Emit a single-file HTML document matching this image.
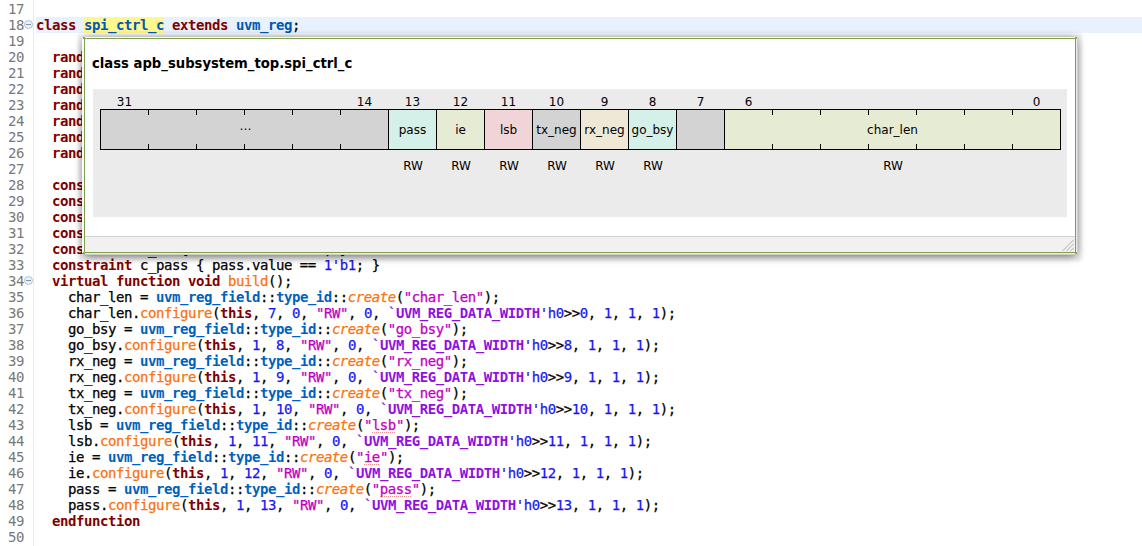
<!DOCTYPE html>
<html>
<head>
<meta charset="utf-8">
<title>spi_ctrl_c</title>
<style>
html,body{margin:0;padding:0;background:#fff;}
body{width:1142px;height:546px;position:relative;overflow:hidden;font-family:"DejaVu Sans Mono","Liberation Mono",monospace;font-size:14px;letter-spacing:-0.4334px;color:#000;}
.gutter{position:absolute;left:33px;top:0;width:1px;height:546px;background:#ebebeb;}
.ln{position:absolute;left:0;width:1142px;height:16px;line-height:16px;white-space:pre;}
.ln.cur::before{content:"";position:absolute;left:36px;right:0;top:0;height:16px;background:#e8f2fe;z-index:0;}
.num{position:absolute;left:8px;top:0;color:#787878;}
.tx{position:absolute;left:36px;top:0;z-index:1;-webkit-text-stroke:0.25px;}
.fold{position:absolute;left:24px;top:3px;width:7px;height:7px;border:1px solid #b3c1d5;border-radius:50%;background:#e8f0f9;box-sizing:content-box;}
.fold::after{content:"";position:absolute;left:1px;top:3px;width:5px;height:1px;background:#8292a8;}
b,i{font-weight:normal;font-style:normal;}
b{font-weight:bold;-webkit-text-stroke:0;}
i{font-style:italic;}
.k{color:#7f0000;}
.t{color:#0060c0;}
.c{color:#0058b4;}
.f{color:#f87410;}
.n{color:#1818f0;}
.s{color:#c000c0;}
.s u{text-decoration:none;position:relative;}
.s u::after{content:"";position:absolute;left:0;right:0;bottom:0;height:1px;background:repeating-linear-gradient(90deg,#f08a8a 0,#f08a8a 1px,transparent 1px,transparent 2px);}
.m{color:#9010e0;}
.occ{background:#fff790;}
.pop{letter-spacing:0;z-index:10;position:absolute;left:84px;top:38px;width:990px;height:213px;border:1px solid #7ea04d;background:#fff;box-shadow:-1px -1px 0 0 #fcfafc,1px 1px 0 0 #ece8ec,-2px 0 0 0 #fdfbfd,2px 2px 0 0 #cfc9c9,0.4px 2px 9px 0 rgba(0,0,0,.7),0 2px 3px 6px rgba(0,0,0,.08);font-family:"DejaVu Sans","Liberation Sans",sans-serif;}
.title{position:absolute;left:7px;top:17px;font-size:13.2px;font-weight:bold;line-height:16px;white-space:pre;}
.panel{position:absolute;left:8px;top:50px;width:974px;height:128px;background:#ebebeb;}
.status{position:absolute;left:0;right:0;bottom:0;height:15px;border-top:1px solid #d4d2d0;background:#f2f1f0;}
.cell{position:absolute;top:70px;height:39px;border:1px solid #000;font-size:12px;line-height:41px;text-align:center;white-space:pre;}
.bit{position:absolute;top:56px;width:49px;height:14px;line-height:14px;font-size:12px;text-align:center;}
.acc{position:absolute;top:120px;height:14px;line-height:14px;font-size:12px;text-align:center;}
.cn{position:absolute;width:2px;height:2px;background:#8aa85e;}
.grip{position:absolute;right:1px;bottom:1px;width:12px;height:12px;}
.el{position:relative;top:-4px;left:1px;}
.tick{position:absolute;width:1px;height:5px;background:#000;}
</style>
</head>
<body>
<div class="gutter"></div>
<div class="ln" style="top:1px"><span class="num">17</span><span class="tx"></span></div>
<div class="ln cur" style="top:17px"><span class="num">18</span><span class="fold"></span><span class="tx"><b class="k">class</b> <span class="occ"><b class="c">spi_ctrl_c</b></span> <b class="k">extends</b> <b class="c">uvm_reg</b>;</span></div>
<div class="ln" style="top:33px"><span class="num">19</span><span class="tx"></span></div>
<div class="ln" style="top:49px"><span class="num">20</span><span class="tx">  <b class="k">rand</b> <b class="t">uvm_reg_field</b> char_len;</span></div>
<div class="ln" style="top:65px"><span class="num">21</span><span class="tx">  <b class="k">rand</b> <b class="t">uvm_reg_field</b> go_bsy;</span></div>
<div class="ln" style="top:81px"><span class="num">22</span><span class="tx">  <b class="k">rand</b> <b class="t">uvm_reg_field</b> rx_neg;</span></div>
<div class="ln" style="top:97px"><span class="num">23</span><span class="tx">  <b class="k">rand</b> <b class="t">uvm_reg_field</b> tx_neg;</span></div>
<div class="ln" style="top:113px"><span class="num">24</span><span class="tx">  <b class="k">rand</b> <b class="t">uvm_reg_field</b> lsb;</span></div>
<div class="ln" style="top:129px"><span class="num">25</span><span class="tx">  <b class="k">rand</b> <b class="t">uvm_reg_field</b> ie;</span></div>
<div class="ln" style="top:145px"><span class="num">26</span><span class="tx">  <b class="k">rand</b> <b class="t">uvm_reg_field</b> pass;</span></div>
<div class="ln" style="top:161px"><span class="num">27</span><span class="tx"></span></div>
<div class="ln" style="top:177px"><span class="num">28</span><span class="tx">  <b class="k">constraint</b> c_go_bsy { go_bsy.value == <span class="n">1'b1</span>; }</span></div>
<div class="ln" style="top:193px"><span class="num">29</span><span class="tx">  <b class="k">constraint</b> c_rx_neg { rx_neg.value == <span class="n">1'b1</span>; }</span></div>
<div class="ln" style="top:209px"><span class="num">30</span><span class="tx">  <b class="k">constraint</b> c_tx_neg { tx_neg.value == <span class="n">1'b1</span>; }</span></div>
<div class="ln" style="top:225px"><span class="num">31</span><span class="tx">  <b class="k">constraint</b> c_lsb { lsb.value == <span class="n">1'b1</span>; }</span></div>
<div class="ln" style="top:241px"><span class="num">32</span><span class="tx">  <b class="k">constraint</b> c_ie { ie.value == <span class="n">1'b1</span>; }</span></div>
<div class="ln" style="top:257px"><span class="num">33</span><span class="tx">  <b class="k">constraint</b> c_pass { pass.value == <span class="n">1'b1</span>; }</span></div>
<div class="ln" style="top:273px"><span class="num">34</span><span class="fold"></span><span class="tx">  <b class="k">virtual</b> <b class="k">function</b> <b class="k">void</b> <span class="f">build</span>();</span></div>
<div class="ln" style="top:289px"><span class="num">35</span><span class="tx">    char_len = <b class="t">uvm_reg_field</b>::<b class="t">type_id</b>::<i class="f">create</i>(<span class="s">"char_len"</span>);</span></div>
<div class="ln" style="top:305px"><span class="num">36</span><span class="tx">    char_len.<span class="f">configure</span>(<b class="k">this</b>, <span class="n">7</span>, <span class="n">0</span>, <span class="s">"RW"</span>, <span class="n">0</span>, <b class="m">`UVM_REG_DATA_WIDTH</b><span class="n">'h0</span>&gt;&gt;<span class="n">0</span>, <span class="n">1</span>, <span class="n">1</span>, <span class="n">1</span>);</span></div>
<div class="ln" style="top:321px"><span class="num">37</span><span class="tx">    go_bsy = <b class="t">uvm_reg_field</b>::<b class="t">type_id</b>::<i class="f">create</i>(<span class="s">"go_bsy"</span>);</span></div>
<div class="ln" style="top:337px"><span class="num">38</span><span class="tx">    go_bsy.<span class="f">configure</span>(<b class="k">this</b>, <span class="n">1</span>, <span class="n">8</span>, <span class="s">"RW"</span>, <span class="n">0</span>, <b class="m">`UVM_REG_DATA_WIDTH</b><span class="n">'h0</span>&gt;&gt;<span class="n">8</span>, <span class="n">1</span>, <span class="n">1</span>, <span class="n">1</span>);</span></div>
<div class="ln" style="top:353px"><span class="num">39</span><span class="tx">    rx_neg = <b class="t">uvm_reg_field</b>::<b class="t">type_id</b>::<i class="f">create</i>(<span class="s">"rx_neg"</span>);</span></div>
<div class="ln" style="top:369px"><span class="num">40</span><span class="tx">    rx_neg.<span class="f">configure</span>(<b class="k">this</b>, <span class="n">1</span>, <span class="n">9</span>, <span class="s">"RW"</span>, <span class="n">0</span>, <b class="m">`UVM_REG_DATA_WIDTH</b><span class="n">'h0</span>&gt;&gt;<span class="n">9</span>, <span class="n">1</span>, <span class="n">1</span>, <span class="n">1</span>);</span></div>
<div class="ln" style="top:385px"><span class="num">41</span><span class="tx">    tx_neg = <b class="t">uvm_reg_field</b>::<b class="t">type_id</b>::<i class="f">create</i>(<span class="s">"tx_neg"</span>);</span></div>
<div class="ln" style="top:401px"><span class="num">42</span><span class="tx">    tx_neg.<span class="f">configure</span>(<b class="k">this</b>, <span class="n">1</span>, <span class="n">10</span>, <span class="s">"RW"</span>, <span class="n">0</span>, <b class="m">`UVM_REG_DATA_WIDTH</b><span class="n">'h0</span>&gt;&gt;<span class="n">10</span>, <span class="n">1</span>, <span class="n">1</span>, <span class="n">1</span>);</span></div>
<div class="ln" style="top:417px"><span class="num">43</span><span class="tx">    lsb = <b class="t">uvm_reg_field</b>::<b class="t">type_id</b>::<i class="f">create</i>(<span class="s">"<u>lsb</u>"</span>);</span></div>
<div class="ln" style="top:433px"><span class="num">44</span><span class="tx">    lsb.<span class="f">configure</span>(<b class="k">this</b>, <span class="n">1</span>, <span class="n">11</span>, <span class="s">"RW"</span>, <span class="n">0</span>, <b class="m">`UVM_REG_DATA_WIDTH</b><span class="n">'h0</span>&gt;&gt;<span class="n">11</span>, <span class="n">1</span>, <span class="n">1</span>, <span class="n">1</span>);</span></div>
<div class="ln" style="top:449px"><span class="num">45</span><span class="tx">    ie = <b class="t">uvm_reg_field</b>::<b class="t">type_id</b>::<i class="f">create</i>(<span class="s">"<u>ie</u>"</span>);</span></div>
<div class="ln" style="top:465px"><span class="num">46</span><span class="tx">    ie.<span class="f">configure</span>(<b class="k">this</b>, <span class="n">1</span>, <span class="n">12</span>, <span class="s">"RW"</span>, <span class="n">0</span>, <b class="m">`UVM_REG_DATA_WIDTH</b><span class="n">'h0</span>&gt;&gt;<span class="n">12</span>, <span class="n">1</span>, <span class="n">1</span>, <span class="n">1</span>);</span></div>
<div class="ln" style="top:481px"><span class="num">47</span><span class="tx">    pass = <b class="t">uvm_reg_field</b>::<b class="t">type_id</b>::<i class="f">create</i>(<span class="s">"<u>pass</u>"</span>);</span></div>
<div class="ln" style="top:497px"><span class="num">48</span><span class="tx">    pass.<span class="f">configure</span>(<b class="k">this</b>, <span class="n">1</span>, <span class="n">13</span>, <span class="s">"RW"</span>, <span class="n">0</span>, <b class="m">`UVM_REG_DATA_WIDTH</b><span class="n">'h0</span>&gt;&gt;<span class="n">13</span>, <span class="n">1</span>, <span class="n">1</span>, <span class="n">1</span>);</span></div>
<div class="ln" style="top:513px"><span class="num">49</span><span class="tx">  <b class="k">endfunction</b></span></div>
<div class="ln" style="top:529px"><span class="num">50</span><span class="tx"></span></div>
<div class="pop">
<div class="title">class apb_subsystem_top.spi_ctrl_c</div>
<div class="panel"></div>
<div class="cell" style="left:15px;width:287px;background:#d3d3d3"><span class="el">…</span></div>
<div class="bit" style="left:15px">31</div>
<div class="bit" style="left:255px">14</div>
<div class="tick" style="left:63px;top:71px"></div>
<div class="tick" style="left:63px;top:105px"></div>
<div class="tick" style="left:111px;top:71px"></div>
<div class="tick" style="left:111px;top:105px"></div>
<div class="tick" style="left:159px;top:71px"></div>
<div class="tick" style="left:159px;top:105px"></div>
<div class="tick" style="left:207px;top:71px"></div>
<div class="tick" style="left:207px;top:105px"></div>
<div class="tick" style="left:255px;top:71px"></div>
<div class="tick" style="left:255px;top:105px"></div>
<div class="cell" style="left:303px;width:47px;background:#d5efe9">pass</div>
<div class="bit" style="left:303px">13</div>
<div class="acc" style="left:303px;width:50px">RW</div>
<div class="cell" style="left:351px;width:47px;background:#e6ecd4">ie</div>
<div class="bit" style="left:351px">12</div>
<div class="acc" style="left:351px;width:50px">RW</div>
<div class="cell" style="left:399px;width:47px;background:#f0d4d8">lsb</div>
<div class="bit" style="left:399px">11</div>
<div class="acc" style="left:399px;width:50px">RW</div>
<div class="cell" style="left:447px;width:47px;background:#d3d3d3">tx_neg</div>
<div class="bit" style="left:447px">10</div>
<div class="acc" style="left:447px;width:50px">RW</div>
<div class="cell" style="left:495px;width:47px;background:#efe8d6">rx_neg</div>
<div class="bit" style="left:495px">9</div>
<div class="acc" style="left:495px;width:50px">RW</div>
<div class="cell" style="left:543px;width:47px;background:#d5efe9">go_bsy</div>
<div class="bit" style="left:543px">8</div>
<div class="acc" style="left:543px;width:50px">RW</div>
<div class="cell" style="left:591px;width:47px;background:#d3d3d3"></div>
<div class="bit" style="left:591px">7</div>
<div class="cell" style="left:639px;width:335px;background:#e6ecd4">char_len</div>
<div class="bit" style="left:639px">6</div>
<div class="bit" style="left:927px">0</div>
<div class="tick" style="left:687px;top:71px"></div>
<div class="tick" style="left:687px;top:105px"></div>
<div class="tick" style="left:735px;top:71px"></div>
<div class="tick" style="left:735px;top:105px"></div>
<div class="tick" style="left:783px;top:71px"></div>
<div class="tick" style="left:783px;top:105px"></div>
<div class="tick" style="left:831px;top:71px"></div>
<div class="tick" style="left:831px;top:105px"></div>
<div class="tick" style="left:879px;top:71px"></div>
<div class="tick" style="left:879px;top:105px"></div>
<div class="tick" style="left:927px;top:71px"></div>
<div class="tick" style="left:927px;top:105px"></div>
<div class="acc" style="left:639px;width:338px">RW</div>
<div class="status"><svg class="grip" viewBox="0 0 12 12"><g stroke="#a9a7a5" stroke-width="0.9" fill="none"><path d="M0.5 12 L12 0.5"/><path d="M4.5 12 L12 4.5"/><path d="M8.5 12 L12 8.5"/></g></svg></div>
<div class="cn" style="left:-2px;top:-2px"></div><div class="cn" style="right:-2px;top:-2px"></div><div class="cn" style="left:-2px;bottom:-2px"></div><div class="cn" style="right:-2px;bottom:-2px"></div>
</div>
</body>
</html>
